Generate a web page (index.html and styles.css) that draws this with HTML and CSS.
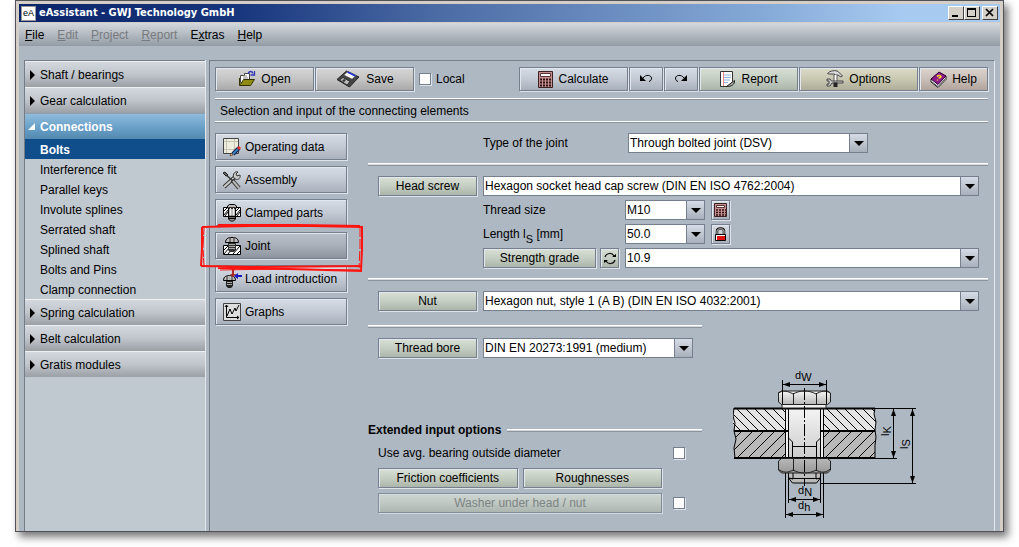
FILE: index.html
```html
<!DOCTYPE html>
<html lang="en">
<head>
<meta charset="utf-8">
<title>eAssistant - GWJ Technology GmbH</title>
<link rel="stylesheet" href="styles.css">
</head>
<body>
<div class="window">
  <header class="titlebar">
    <span class="app-icon">eA</span>
    <h1 class="title">eAssistant - GWJ Technology GmbH</h1>
    <div class="window-buttons">
      <button class="win-btn" aria-label="Minimize"><svg width="14" height="12"><path d="M3 8h6v2H3z"/></svg></button>
      <button class="win-btn" aria-label="Maximize"><svg width="14" height="12"><path d="M2 1h9v9H2zM3 3v6h7V3z" fill-rule="evenodd"/></svg></button>
      <button class="win-btn close" aria-label="Close"><svg width="14" height="12"><path d="M3 2l7 7M10 2L3 9" stroke="#000" stroke-width="1.7"/></svg></button>
    </div>
  </header>
  <nav class="menubar">
    <button class="menu"><u>F</u>ile</button>
    <button class="menu" disabled><u>E</u>dit</button>
    <button class="menu" disabled><u>P</u>roject</button>
    <button class="menu" disabled><u>R</u>eport</button>
    <button class="menu">E<u>x</u>tras</button>
    <button class="menu"><u>H</u>elp</button>
  </nav>
  <div class="body">
    <nav class="sidebar">
      <button class="group">Shaft / bearings</button>
      <button class="group">Gear calculation</button>
      <button class="group open">Connections</button>
      <a class="entry current" href="#bolts">Bolts</a>
      <a class="entry" href="#fit">Interference fit</a>
      <a class="entry" href="#keys">Parallel keys</a>
      <a class="entry" href="#involute">Involute splines</a>
      <a class="entry" href="#serrated">Serrated shaft</a>
      <a class="entry" href="#splined">Splined shaft</a>
      <a class="entry" href="#pins">Bolts and Pins</a>
      <a class="entry" href="#clamp">Clamp connection</a>
      <button class="group">Spring calculation</button>
      <button class="group">Belt calculation</button>
      <button class="group">Gratis modules</button>
    </nav>
    <main class="panel">
      <div class="toolbar">
        <button class="btn grey w-file">
          <svg width="18" height="18" viewBox="0 0 18 18"><path d="M2.500 5.500h4V3.500h5v9h-9z" fill="#fff" stroke="#444"/><path d="M5 6h4M5 8h5" stroke="#888"/><path d="M1.500 8v7.500h11l4-6h-11l-3 5" fill="#8f8a12" stroke="#333300"/><path d="M10 4c1-3 4-3.500 5-.5M16.500 1v4h-4" fill="none" stroke="#3038b8" stroke-width="1.300"/></svg>
          Open</button>
        <button class="btn grey w-file">
          <svg width="26" height="18" viewBox="0 0 26 18"><path d="M2 9.500L11.500 1 24 7 14.500 17z" fill="#444" stroke="#222"/><path d="M9 5l4-3.500 8 4L17 9z" fill="#fff" stroke="#555" stroke-width=".5"/><path d="M12.500 2l8 4" stroke="#2030d0" stroke-width="1.600"/><path d="M4.500 10L8 7.500l7 4-3 3.500z" fill="#bbb" stroke="#111" stroke-width=".7"/><path d="M7 11l2-2 2 1-2 2z" fill="#333"/></svg>
          Save</button>
        <label class="check local"><input type="checkbox">Local</label>
        <button class="btn w-calc">
          <svg width="15" height="17" viewBox="0 0 15 17"><path d="M.5.5h14v16H.5z" fill="#c59090" stroke="#3a2020"/><path d="M2.500 2.500h10v3h-10z" fill="#fff" stroke="#5a3030"/><path d="M2 8.500h11M2 11.500h11M2 14.500h11" stroke="#301010" stroke-width="2" stroke-dasharray="2 1"/></svg>
          Calculate</button>
        <button class="btn w-small" aria-label="Undo"><svg width="14" height="12" viewBox="0 0 14 12"><path d="M1 2v6h6z"/><path d="M4 5c3-4 8-3 8.500 0 0 2-1 3-2.500 3.500" fill="none" stroke="#000"/></svg></button>
        <button class="btn w-small" aria-label="Redo"><svg width="14" height="12" viewBox="0 0 14 12"><path d="M13 2v6H7z"/><path d="M10 5C7 1 2 2 1.500 5c0 2 1 3 2.500 3.500" fill="none" stroke="#000"/></svg></button>
        <button class="btn green w-report">
          <svg width="17" height="17" viewBox="0 0 17 17"><path d="M1.500.5h12v10l-4 5h-8z" fill="#fff" stroke="#333"/><path d="M4 4h8M4 6.500h8M4 9h7M4 11.500h5" stroke="#8cb4e0"/><path d="M4.500 1v14" stroke="#e88"/><path d="M7.500 15.500l8-6c.5 4-3 6-8 6z" fill="#aaa" stroke="#222"/></svg>
          Report</button>
        <button class="btn olive w-options">
          <svg width="18" height="18" viewBox="0 0 18 18"><path d="M1.500 3.500C4 .5 10 0 12 1.500L16.500 6 15 7l-3-2H8.500V4H3z" fill="#ddd" stroke="#444"/><path d="M9.500 5v8" stroke="#555" stroke-width="4"/><path d="M9.500 5v8" stroke="#fff" stroke-width="2"/><path d="M1 9h3l1.500 2H17v2H6l-2 3H1v-2h2v-3H1z" fill="#ccc" stroke="#444"/><path d="M7.500 12.500h4V17h-4z" fill="#222"/></svg>
          Options</button>
        <button class="btn rose w-help">
          <svg width="17" height="17" viewBox="0 0 17 17"><path d="M1 8v3l7 5.500 8-8V5z" fill="#fff" stroke="#222"/><path d="M1 8l8-7 7 4-8 8.500z" fill="#8c1a8c" stroke="#300030"/><path d="M1.500 10.500l6.500 5 7.500-8" fill="none" stroke="#555"/><path d="M7 5.500c2-2 5-.5 3.500 1L8.500 7M7.500 8.500v1" fill="none" stroke="#ffe020" stroke-width="1.500"/></svg>
          Help</button>
      </div>
      <h2 class="banner">Selection and input of the connecting elements</h2>
      <div class="columns">
        <div class="steps">
          <button class="btn step">
            <svg width="20" height="20" viewBox="0 0 20 20"><path d="M1.500 1.500h15v15h-15z" fill="#eeeede" stroke="#444"/><path d="M4.500 2v14M12.500 2v14M2 4.500h14M2 12.500h14" stroke="#c4c2b2"/><path d="M11 17l6-6" stroke="#181850" stroke-width="4"/><path d="M11 17l5-5" stroke="#38b" stroke-width="2"/><path d="M16 12l2-2" stroke="#e33" stroke-width="3"/><path d="M8 19l1-3 2 2z" fill="#fa4" stroke="#222" stroke-width=".5"/></svg>
            Operating data</button>
          <button class="btn step">
            <svg width="20" height="20" viewBox="0 0 20 20"><path d="M2 17L13 7" stroke="#333" stroke-width="4"/><path d="M2 17L13 7" stroke="#ccc" stroke-width="2"/><path d="M12 8c-2-4 1-7 4-6l-2 2 1 2 3-1c1 4-3 6-6 3z" fill="#ccc" stroke="#333"/><path d="M2 3l9 8" stroke="#333" stroke-width="1.500"/><path d="M1 3l2-1 3 3-2 1z" fill="#666" stroke="#222"/><path d="M10 10l7 8" stroke="#333" stroke-width="4"/><path d="M11 11l6 7" stroke="#bbb" stroke-width="2"/></svg>
            Assembly</button>
          <button class="btn step">
            <svg width="20" height="20" viewBox="0 0 20 20"><path d="M1.500 4.500h17v9h-17z" fill="#fff" stroke="#000"/><path d="M2 8l3-3M2 12l4-5M3 13l3-4M14 8l3-3M14 12l4-5M15 13l3-4" stroke="#000"/><path d="M5.500 5V3l2-1.500h5l2 1.500v2zM6.500 5h7v11l-2 2h-3l-2-2z" fill="#bbb" stroke="#000"/><path d="M8.500 5v9M11.500 5v9" stroke="#eee"/><path d="M6 13.500h8M7 15.500h6" stroke="#000" stroke-width="1.500"/></svg>
            Clamped parts</button>
          <div class="marked">
            <button class="btn step active">
              <svg width="20" height="20" viewBox="0 0 20 20"><path d="M1.500 9.500h17v9h-17z" fill="#fff" stroke="#000"/><path d="M2 14l4-4M2 18l5-6M6 18l3-4M11 18l7-8M15 18l3-3" stroke="#000"/><path d="M3.500 6.500c0-4 3-5 6.500-5s6.500 1 6.500 5z" fill="#bbb" stroke="#000"/><path d="M8 2v4M12 2v4" stroke="#333"/><path d="M6 7h8v7l-2 2H8l-2-2z" fill="#333"/><path d="M7 8.500h6M7 10.500h6M7 12.500h6" stroke="#aaa"/></svg>
              Joint</button>
            <svg class="mark" width="165" height="50" viewBox="0 0 165 50" aria-hidden="true"><g fill="none" stroke="#ff1410"><path d="M2 3L50 2h60l53 1" stroke-width="2"/><path d="M18 1h80l62 1M2 3v22l-1 17M162 2v24l-1 20" stroke-width="2"/><path d="M4 4l-1 19 1 19" stroke-dasharray="7 1 12 2"/><path d="M160 3v20l-1 21" stroke-dasharray="10 2"/><path d="M1 42l62 1 98-1M18 44l70 1 74 2" stroke-width="2"/><path d="M20 46l60-1 80 1"/></g></svg>
          </div>
          <button class="btn step">
            <svg width="20" height="20" viewBox="0 0 20 20"><path d="M1.500 11.500c0-4 3-5 6-5s6 1 6 5z" fill="#bbb" stroke="#000"/><path d="M5 7v4M10 7v4" stroke="#333"/><path d="M4 12h7v5l-2 2H6l-2-2z" fill="#222"/><path d="M5 13.500h5M5 15.500h5" stroke="#aaa"/><path d="M9 0h4v1h-1v4h2l-3 3-3-3h2V1z" fill="#b02828"/><path d="M12 7l4-3v2h4v2h-4v2z" fill="#1818c0"/></svg>
            Load introduction</button>
          <button class="btn step">
            <svg width="20" height="20" viewBox="0 0 20 20"><path d="M1.500 1.500h17v17h-17z" fill="#ddd" stroke="#444"/><path d="M4.500 3v12.500H17M3 5l1.500-2L6 5M15 14l2 1.500-2 1.500M5 14l3-7 2 5 3-6 1 3 3-6" fill="none" stroke="#000"/></svg>
            Graphs</button>
        </div>
        <form class="form">
          <div class="row type-row">
            <label for="type" class="type-label">Type of the joint</label>
            <div class="combo w-type"><select id="type"><option>Through bolted joint (DSV)</option></select></div>
          </div>
          <hr class="rule">
          <section class="fields">
            <div class="row">
              <button type="button" class="btn green w-name">Head screw</button>
              <div class="combo grow"><select aria-label="Head screw"><option>Hexagon socket head cap screw (DIN EN ISO 4762:2004)</option></select></div>
            </div>
            <div class="row inset">
              <label for="size" class="field-label">Thread size</label>
              <div class="combo w-value"><select id="size"><option>M10</option></select></div>
              <button type="button" class="btn icon" aria-label="Calculate thread size"><svg width="13" height="14" viewBox="0 0 13 14"><path d="M.5.5h12v13H.5z" fill="#c59090" stroke="#3a2020"/><path d="M2.500 2.500h8v2h-8z" fill="#fff" stroke="#5a3030"/><path d="M2 7h10M2 9.500h10M2 12h10" stroke="#301010" stroke-width="1.500" stroke-dasharray="2 1"/></svg></button>
            </div>
            <div class="row inset">
              <label for="length" class="field-label">Length l<sub>S</sub> [mm]</label>
              <div class="combo w-value"><select id="length"><option>50.0</option></select></div>
              <button type="button" class="btn icon" aria-label="Lock length"><svg width="13" height="15" viewBox="0 0 13 15"><path d="M3 8V4c0-3.500 7-3.500 7 0v4" fill="none" stroke="#111" stroke-width="2.500"/><path d="M3 8V4c0-3 7-3 7 0v4" fill="none" stroke="#ccc"/><path d="M1.500 7.500h10v6h-10z" fill="#fff" stroke="#000"/><path d="M3 9h8v4H3z" fill="#e01010"/></svg></button>
            </div>
            <div class="row inset">
              <div class="field-label strength">
                <button type="button" class="btn green grow">Strength grade</button>
                <button type="button" class="btn green icon" aria-label="Swap"><svg width="14" height="13" viewBox="0 0 14 13"><path d="M2 5c1-4 7-5 9-1M12 8c-1 4-7 5-9 1" fill="none" stroke="#111" stroke-width="1.200"/><path d="M9 5h4V2zM5 8H1v3z"/></svg></button>
              </div>
              <div class="combo grow"><select aria-label="Strength grade"><option>10.9</option></select></div>
            </div>
          </section>
          <hr class="rule">
          <section class="fields">
            <div class="row">
              <button type="button" class="btn green w-name">Nut</button>
              <div class="combo grow"><select aria-label="Nut"><option>Hexagon nut, style 1 (A B) (DIN EN ISO 4032:2001)</option></select></div>
            </div>
          </section>
          <div class="lower">
            <div class="lower-left">
              <hr class="rule">
              <section class="fields">
                <div class="row">
                  <button type="button" class="btn green w-name">Thread bore</button>
                  <div class="combo grow"><select aria-label="Thread bore"><option>DIN EN 20273:1991 (medium)</option></select></div>
                </div>
              </section>
              <h3 class="extended">Extended input options<span class="rule grow"></span></h3>
              <div class="options">
                <label for="avg" class="avg-label">Use avg. bearing outside diameter</label>
                <input type="checkbox" id="avg">
                <div class="pair">
                  <button type="button" class="btn green">Friction coefficients</button>
                  <button type="button" class="btn green">Roughnesses</button>
                </div>
                <button type="button" class="btn green washer" disabled>Washer under head / nut</button>
                <input type="checkbox" aria-label="Washer under head / nut">
              </div>
            </div>
            <svg class="diagram" width="186" height="150" viewBox="13 5 186 150" role="img" aria-label="Through bolted joint">
              <defs>
                <pattern id="hatch-a" width="9" height="9" patternUnits="userSpaceOnUse"><path d="M-1-1l11 11M-1 8l2 2M8-1l2 2" stroke="#000"/></pattern>
                <pattern id="hatch-b" width="11" height="11" patternUnits="userSpaceOnUse"><path d="M-1 12L12-1M-1 1l2-2M10 12l2-2" stroke="#000"/></pattern>
                <linearGradient id="metal" x2="0" y2="1"><stop stop-color="#f4f4f4"/><stop offset="1" stop-color="#b8b8b8"/></linearGradient>
                <linearGradient id="nut" x2="0" y2="1"><stop stop-color="#b8b8b8"/><stop offset="1" stop-color="#989898"/></linearGradient>
                <marker id="arrow" markerWidth="7" markerHeight="5" refX="7" refY="2.500" orient="auto-start-reverse" markerUnits="userSpaceOnUse"><path d="M0 0l7 2.500L0 5z"/></marker>
              </defs>
              <path d="M14 43h51v23H15l-2-8 1-7zM103 43h52l-1 6 2 8-1 9h-52z" fill="#e4e4e4"/>
              <path d="M14 43h51v23H15l-2-8 1-7zM103 43h52l-1 6 2 8-1 9h-52z" fill="url(#hatch-a)"/>
              <path d="M15 66h50v27H15l-1-10 2-8zM103 66h52l1 6-1 8v13h-52z" fill="#b9b9b9"/>
              <path d="M15 66h50v27H15l-1-10 2-8zM103 66h52l1 6-1 8v13h-52z" fill="url(#hatch-b)"/>
              <path d="M65 43h38v50H65z" fill="#eee"/>
              <path d="M68.500 43h32v70l-4 5h-24l-4-5z" fill="url(#metal)" stroke="#000"/>
              <path d="M14 43.500h141M14 66h54M100 66h55M14 93h141" stroke="#000" stroke-width="2"/>
              <path d="M14 43l-1 8 2 7-1 8 2 8-2 9 1 10M155 43l-1 6 2 8-1 8 1 7-1 8v13" fill="none" stroke="#000"/>
              <path d="M65.500 43v110M103.500 43v110M68.500 73l4 4v16M100.500 73l-4 4v16M72 81.500h24" fill="none" stroke="#000"/>
              <path d="M62 39h44v4H62z" fill="#eee" stroke="#222"/>
              <path d="M58.500 28l3-2h46l3 2v9l-3 2.500h-46l-3-2.500z" fill="url(#metal)" stroke="#222"/>
              <path d="M58 28c5-3 10-2 15 1 7-4 16-4 23 0 5-3 10-4 14-1M73.500 28v12M96.500 28v12" fill="none" stroke="#222"/>
              <path d="M58.500 96l3-2.500h46l3 2.500v9l-3 3h-46l-3-3z" fill="url(#nut)" stroke="#222"/>
              <path d="M73.500 94v12M96.500 94v12M58 104c5 4 10 4 15 1 7 4 16 4 23 0 5 3 10 3 14-1" fill="none" stroke="#222"/>
              <path d="M68 113.500h33M73 108v6l-4-1M96 108v6l4-1" fill="none" stroke="#000"/>
              <path d="M84.500 23v98" stroke="#000" stroke-dasharray="12 2 2 2"/>
              <path d="M62.500 15v24M106.500 15v24M68.500 113v25M100.500 113v25M155 43.500h41M155 93.500h22M100 118.500h96" stroke="#000"/>
              <g stroke="#000" marker-start="url(#arrow)" marker-end="url(#arrow)">
                <path d="M63 19.500h43"/><path d="M69 134.500h31"/><path d="M66 149.500h37"/><path d="M173.500 44v49"/><path d="M192.500 44v74"/>
              </g>
              <g class="dims"><text x="75" y="14">d<tspan dy="2">W</tspan></text><text x="78" y="129">d<tspan dy="2">N</tspan></text><text x="78" y="144">d<tspan dy="2">h</tspan></text><text transform="translate(169 71) rotate(-90)">l<tspan dy="2">K</tspan></text><text transform="translate(188 84) rotate(-90)">l<tspan dy="2">S</tspan></text></g>
            </svg>
          </div>
        </form>
      </div>
    </main>
  </div>
</div>
</body>
</html>
```
FILE: styles.css
```css
* { box-sizing: border-box; }

body {
  margin: 0;
  padding: 0 15px 15px;
  min-height: 100vh;
  display: flex;
  background: #fff;
  color: #000;
  font: 12px/16px "Liberation Sans", Arial, sans-serif;
}

button, select, input { font: inherit; color: inherit; margin: 0; }
button { cursor: pointer; white-space: nowrap; }
h1, h2, h3 { margin: 0; font-size: inherit; font-weight: normal; }
.grow { flex: 1; }

.window {
  flex: 1;
  display: flex;
  flex-direction: column;
  padding: 3px 3px 0;
  background: #aeb8c3;
  border: 1px solid #505259;
  box-shadow: inset 3px 3px #d4cec6, inset -3px 0 #d4cec6, 4px 5px 8px #777;
}

.titlebar {
  height: 18px;
  display: flex;
  align-items: center;
  gap: 3px;
  padding: 0 2px;
  background: linear-gradient(90deg, #0a246a, #17357c 22%, #4a6aa4 42%, #84a8d6 75%, #a6caf0 90%);
}
.app-icon {
  width: 15px;
  height: 15px;
  border: 1px solid #999;
  background: #fff;
  font: 9px/13px "Liberation Sans", sans-serif;
  text-align: center;
}
.title {
  flex: 1;
  color: #fff;
  font: bold 11px/16px "DejaVu Sans Condensed", "DejaVu Sans", sans-serif;
}
.window-buttons { display: flex; }
.win-btn {
  width: 16px;
  height: 14px;
  padding: 0;
  border: 1px solid;
  border-color: #fff #404040 #404040 #fff;
  background: #d4d0c8;
}
.win-btn svg { display: block; }
.close { margin-left: 2px; }

.menubar {
  height: 24px;
  display: flex;
  align-items: center;
  gap: 13px;
  padding: 0 6px;
  border-top: 1px solid #d4cec6;
  background: linear-gradient(#d3d8dd, #939ca5);
}
.menu { padding: 0; border: 0; background: none; }
.menu:disabled { color: #777b80; }

.body { flex: 1; display: flex; gap: 4px; padding: 14px 5px 0; }

.sidebar {
  width: 181px;
  display: flex;
  flex-direction: column;
  border: solid #737d88;
  border-width: 1px 0 0 1px;
  box-shadow: 1px 0 #e4e8ec;
  background: #c0c8d0;
}
.group {
  height: 26px;
  display: flex;
  align-items: center;
  gap: 5px;
  padding: 0 5px;
  border: 0;
  border-top: 1px solid #eef0f2;
  background: linear-gradient(#d3d8de, #c0c5cc 50%, #9ba0a7);
}
.group::before {
  content: "";
  border: solid transparent;
  border-width: 5px 0 5px 5px;
  border-left-color: #000;
}
.group.open {
  gap: 5px;
  padding-left: 3px;
  border-top-color: #8c9fb0;
  background: linear-gradient(#90bcdc, #659dc6 60%, #5489af);
  color: #fff;
  font-weight: bold;
}
.group.open::before { border-width: 0 0 7px 7px; border-color: transparent transparent #fff; }
.entry {
  height: 20px;
  padding-left: 15px;
  color: inherit;
  line-height: 22px;
  text-decoration: none;
}
.entry.current { background: #104e8b; color: #fff; font-weight: bold; }

.panel {
  flex: 1;
  min-width: 0;
  padding: 6px 6px 17px 5px;
  border: 1px solid #737d88;
  border-width: 1px 1px 0;
  border-right-color: #e4e8ec;
}

.btn {
  height: 20px;
  display: flex;
  align-items: center;
  justify-content: center;
  gap: 5px;
  padding: 0 4px;
  border: 1px solid #757f8d;
  background: linear-gradient(#d5dce5, #c3cad4 50%, #a8b0bb);
  box-shadow: inset 1px 1px #e3e8ee, 1px 1px #dfe4ea;
}
.btn svg { flex: none; }
.grey { background: linear-gradient(#d6d6d6, #c4c4c4 50%, #a9a9a9); }
.green { background: linear-gradient(#d8e0d6, #c5cec3 50%, #acb5aa); }
.olive { background: linear-gradient(#dadac8, #c9c9b2 50%, #adad99); }
.rose { background: linear-gradient(#ddd3cd, #cabfb9 50%, #b0a49c); }
.btn:disabled { color: #6d736f; opacity: .75; }

.toolbar { display: flex; align-items: center; gap: 1px; }
.toolbar .btn { height: 24px; }
.w-file { width: 99px; }
.w-calc { width: 109px; margin-left: auto; }
.w-small { width: 34px; }
.w-report { width: 99px; }
.w-options { width: 119px; }
.w-help { width: 69px; }

input[type="checkbox"] {
  appearance: none;
  width: 12px;
  height: 12px;
  border: 1px solid #757f8d;
  background: #fff;
  box-shadow: 1px 1px #dfe4ea;
}
.check { display: flex; align-items: center; gap: 5px; }
.local { margin-left: 4px; }

.banner {
  margin: 7px 0 11px;
  padding: 3px 5px 1px;
  border: solid #fff;
  border-width: 1px 0;
  line-height: 18px;
  box-shadow: inset 0 1px #8a929b, 0 1px #8a929b;
}

.columns { display: flex; gap: 20px; }
.steps { width: 133px; display: flex; flex-direction: column; gap: 6px; }
.step {
  width: 132px;
  height: 27px;
  justify-content: flex-start;
  gap: 3px;
  padding: 1px 0 0 6px;
}
.step.active { background: linear-gradient(#b9c0c9, #a9b0ba 50%, #8d949e); }
.marked { position: relative; }
.mark { position: absolute; left: -15px; top: -8px; z-index: 1; pointer-events: none; }

.form { flex: 1; min-width: 0; }
.row { display: flex; align-items: center; gap: 6px; }
.type-row { padding-left: 115px; gap: 0; }
.type-label { width: 145px; }
.rule {
  height: 3px;
  margin: 0;
  border: 0;
  background: linear-gradient(#fff 33%, #d5dade 33% 66%, #8a929b 66%);
}
.type-row + .rule { margin-top: 10px; }
.fields {
  display: flex;
  flex-direction: column;
  gap: 4px;
  padding: 10px 9px 10px 10px;
}
.inset { padding-left: 105px; }
.field-label { width: 136px; line-height: 20px; white-space: nowrap; }
.field-label sub { font-size: 11px; line-height: 0; vertical-align: -5px; }
.strength { display: flex; gap: 4px; }
.w-name { width: 99px; }
.w-value { width: 80px; }
.w-type { width: 240px; }
.icon { width: 19px; padding: 0; }

.combo { position: relative; }
.combo select {
  appearance: none;
  display: block;
  width: 100%;
  height: 20px;
  padding: 0 20px 0 1px;
  border: 1px solid #757f8d;
  border-radius: 0;
  background: linear-gradient(#757f8d, #757f8d) right 17px top / 1px 100% no-repeat,
    linear-gradient(#d5dce5, #a8b0bb) right / 17px 100% no-repeat, #fff;
}
.combo::after {
  content: "";
  position: absolute;
  right: 4px;
  top: 8px;
  border: solid transparent;
  border-width: 5px 5px 0;
  border-top-color: #000;
  pointer-events: none;
}

.lower { display: flex; align-items: flex-end; gap: 31px; padding-top: 4px; }
.lower-left { width: 334px; }
.lower-left .fields { padding-bottom: 64px; }
.extended { display: flex; align-items: center; gap: 6px; font-weight: bold; }
.options {
  display: grid;
  grid-template-columns: 284px 12px;
  align-items: center;
  gap: 5px 11px;
  padding: 5px 0 0 10px;
}
.avg-label { line-height: 20px; }
.pair { display: grid; grid-template-columns: 1fr 1fr; gap: 5px; grid-column: 1; }
.washer { grid-column: 1; }

.diagram { flex: none; margin-bottom: -7px; }
.dims { font: 11px "Liberation Sans", sans-serif; }
```
